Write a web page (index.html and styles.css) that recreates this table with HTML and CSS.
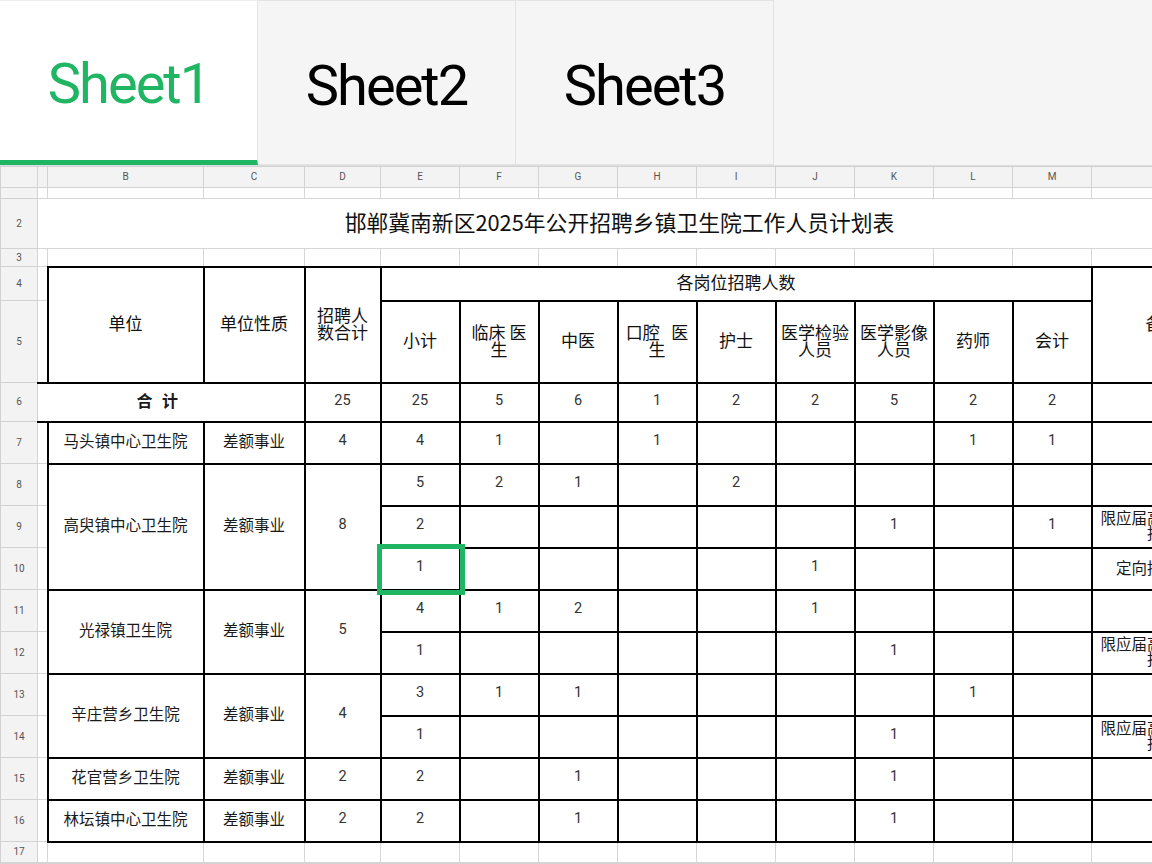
FILE: index.html
```html
<!DOCTYPE html>
<html lang="zh-CN">
<head>
<meta charset="utf-8">
<title>Sheet1</title>
<link rel="stylesheet" href="styles.css">
</head>
<body>
<div class="tabs">
  <div class="tab active">Sheet1</div>
  <div class="tab">Sheet2</div>
  <div class="tab">Sheet3</div>
  <div class="tab-rest"></div>
</div>
<div class="sheet">
<table class="grid">
  <colgroup>
    <col class="w-rh"><col class="w-a"><col class="w-b"><col class="w-c"><col class="w-d">
    <col class="w-x"><col class="w-x"><col class="w-x"><col class="w-x"><col class="w-x">
    <col class="w-x"><col class="w-x"><col class="w-x"><col class="w-x"><col class="w-n">
  </colgroup>
  <tr class="r-hdr">
    <th class="corner"></th><th class="ch"></th><th class="ch">B</th><th class="ch">C</th><th class="ch">D</th>
    <th class="ch">E</th><th class="ch">F</th><th class="ch">G</th><th class="ch">H</th><th class="ch">I</th>
    <th class="ch">J</th><th class="ch">K</th><th class="ch">L</th><th class="ch">M</th><th class="ch"></th>
  </tr>
  <tr class="r1">
    <th class="rh"></th><td></td><td></td><td></td><td></td><td></td><td></td><td></td><td></td><td></td><td></td><td></td><td></td><td></td><td></td>
  </tr>
  <tr class="r2">
    <th class="rh">2</th>
    <td class="title" colspan="14">邯郸冀南新区2025年公开招聘乡镇卫生院工作人员计划表</td>
  </tr>
  <tr class="r3">
    <th class="rh">3</th><td></td><td></td><td></td><td></td><td></td><td></td><td></td><td></td><td></td><td></td><td></td><td></td><td></td><td></td>
  </tr>
  <tr class="r4">
    <th class="rh">4</th><td></td>
    <td class="b hd" rowspan="2">单位</td>
    <td class="b hd" rowspan="2">单位性质</td>
    <td class="b hd" rowspan="2">招聘人<br>数合计</td>
    <td class="b hd" colspan="9">各岗位招聘人数</td>
    <td class="b hd" rowspan="2">备注</td>
  </tr>
  <tr class="r5">
    <th class="rh">5</th><td></td>
    <td class="b hd">小计</td>
    <td class="b hd">临床 医<br>生</td>
    <td class="b hd">中医</td>
    <td class="b hd">口腔&nbsp;&nbsp; 医<br>生</td>
    <td class="b hd">护士</td>
    <td class="b hd">医学检验<br>人员</td>
    <td class="b hd">医学影像<br>人员</td>
    <td class="b hd">药师</td>
    <td class="b hd">会计</td>
  </tr>
  <tr class="r6">
    <th class="rh">6</th>
    <td class="b total" colspan="3">合 计</td>
    <td class="b n">25</td><td class="b n">25</td><td class="b n">5</td><td class="b n">6</td><td class="b n">1</td>
    <td class="b n">2</td><td class="b n">2</td><td class="b n">5</td><td class="b n">2</td><td class="b n">2</td><td class="b"></td>
  </tr>
  <tr class="rd">
    <th class="rh">7</th><td></td>
    <td class="b">马头镇中心卫生院</td><td class="b">差额事业</td><td class="b n">4</td>
    <td class="b n">4</td><td class="b n">1</td><td class="b"></td><td class="b n">1</td><td class="b"></td>
    <td class="b"></td><td class="b"></td><td class="b n">1</td><td class="b n">1</td><td class="b"></td>
  </tr>
  <tr class="rd">
    <th class="rh">8</th><td></td>
    <td class="b" rowspan="3">高臾镇中心卫生院</td><td class="b" rowspan="3">差额事业</td><td class="b n" rowspan="3">8</td>
    <td class="b n">5</td><td class="b n">2</td><td class="b n">1</td><td class="b"></td><td class="b n">2</td>
    <td class="b"></td><td class="b"></td><td class="b"></td><td class="b"></td><td class="b"></td>
  </tr>
  <tr class="rd">
    <th class="rh">9</th><td></td>
    <td class="b n">2</td><td class="b"></td><td class="b"></td><td class="b"></td><td class="b"></td>
    <td class="b"></td><td class="b n">1</td><td class="b"></td><td class="b n">1</td>
    <td class="b note">限应届高校毕业生<br>报考</td>
  </tr>
  <tr class="rd">
    <th class="rh">10</th><td></td>
    <td class="b n sel">1<span class="selbox"></span></td><td class="b"></td><td class="b"></td><td class="b"></td><td class="b"></td>
    <td class="b n">1</td><td class="b"></td><td class="b"></td><td class="b"></td>
    <td class="b note">定向招聘村医</td>
  </tr>
  <tr class="rd">
    <th class="rh">11</th><td></td>
    <td class="b" rowspan="2">光禄镇卫生院</td><td class="b" rowspan="2">差额事业</td><td class="b n" rowspan="2">5</td>
    <td class="b n">4</td><td class="b n">1</td><td class="b n">2</td><td class="b"></td><td class="b"></td>
    <td class="b n">1</td><td class="b"></td><td class="b"></td><td class="b"></td><td class="b"></td>
  </tr>
  <tr class="rd">
    <th class="rh">12</th><td></td>
    <td class="b n">1</td><td class="b"></td><td class="b"></td><td class="b"></td><td class="b"></td>
    <td class="b"></td><td class="b n">1</td><td class="b"></td><td class="b"></td>
    <td class="b note">限应届高校毕业生<br>报考</td>
  </tr>
  <tr class="rd">
    <th class="rh">13</th><td></td>
    <td class="b" rowspan="2">辛庄营乡卫生院</td><td class="b" rowspan="2">差额事业</td><td class="b n" rowspan="2">4</td>
    <td class="b n">3</td><td class="b n">1</td><td class="b n">1</td><td class="b"></td><td class="b"></td>
    <td class="b"></td><td class="b"></td><td class="b n">1</td><td class="b"></td><td class="b"></td>
  </tr>
  <tr class="rd">
    <th class="rh">14</th><td></td>
    <td class="b n">1</td><td class="b"></td><td class="b"></td><td class="b"></td><td class="b"></td>
    <td class="b"></td><td class="b n">1</td><td class="b"></td><td class="b"></td>
    <td class="b note">限应届高校毕业生<br>报考</td>
  </tr>
  <tr class="rd">
    <th class="rh">15</th><td></td>
    <td class="b">花官营乡卫生院</td><td class="b">差额事业</td><td class="b n">2</td>
    <td class="b n">2</td><td class="b"></td><td class="b n">1</td><td class="b"></td><td class="b"></td>
    <td class="b"></td><td class="b n">1</td><td class="b"></td><td class="b"></td><td class="b"></td>
  </tr>
  <tr class="rd">
    <th class="rh">16</th><td></td>
    <td class="b">林坛镇中心卫生院</td><td class="b">差额事业</td><td class="b n">2</td>
    <td class="b n">2</td><td class="b"></td><td class="b n">1</td><td class="b"></td><td class="b"></td>
    <td class="b"></td><td class="b n">1</td><td class="b"></td><td class="b"></td><td class="b"></td>
  </tr>
  <tr class="r17">
    <th class="rh">17</th><td></td><td></td><td></td><td></td><td></td><td></td><td></td><td></td><td></td><td></td><td></td><td></td><td></td><td></td>
  </tr>
</table>
</div>
</body>
</html>
```

FILE: styles.css
```css
html, body {
  margin: 0;
  padding: 0;
}
body {
  width: 1152px;
  height: 864px;
  overflow: hidden;
  background: #ffffff;
  font-family: "Noto Sans CJK SC", sans-serif;
}

/* ---------- sheet tabs ---------- */
.tabs {
  display: flex;
  height: 166px;
  background: #f5f5f5;
  box-sizing: border-box;
  border-bottom: 1px solid #dedede;
}
.tab {
  width: 258px;
  flex: none;
  box-sizing: border-box;
  display: flex;
  align-items: center;
  justify-content: center;
  padding-top: 6px;
  font-family: Roboto, "Noto Sans", sans-serif;
  font-size: 56px;
  letter-spacing: -2px;
  color: #000000;
  background: #f5f5f5;
  border: 1px solid #e3e3e3;
  border-left: none;
}
.tab.active {
  background: #ffffff;
  color: #1fb563;
  border-top: 1px solid #eeeeee;
  border-bottom: 5px solid #1fb563;
}
.tab-rest {
  flex: 1;
  background: #f5f5f5;
}

/* ---------- grid ---------- */
.sheet {
  height: 696px;
  overflow: hidden;
  border-bottom: 2px solid #d4d4d4;
}
.grid {
  border-collapse: collapse;
  table-layout: fixed;
  width: 1233px;
}
.w-rh { width: 37px; }
.w-a { width: 10px; }
.w-b { width: 156px; }
.w-c { width: 101px; }
.w-d { width: 76px; }
.w-x { width: 79px; }
.w-n { width: 142px; }

.grid th,
.grid td {
  border: 1px solid #d6d6d6;
  padding: 0 0 3px 0;
  text-align: center;
  vertical-align: middle;
  font-size: 15.5px;
  font-weight: 400;
  color: #1a1a1a;
  line-height: 1.1;
  overflow: hidden;
  white-space: nowrap;
}
.grid th.corner,
.grid th.ch,
.grid th.rh {
  background: #f3f3f3;
  font-family: Roboto, "Noto Sans", sans-serif;
  font-size: 10px;
  color: #555555;
  border-color: #d2d2d2;
  line-height: 1;
  padding: 0;
}

.r-hdr { height: 21px; }
.r1 { height: 11px; }
.r2 { height: 50px; }
.r3 { height: 18px; }
.r4 { height: 34px; }
.r5 { height: 82px; }
.r6 { height: 39px; }
.rd { height: 42px; }
.r17 { height: 21px; }

.grid td.title {
  font-size: 21.8px;
  color: #111111;
  padding: 0 32px 4px 0;
}

.grid td.b {
  border: 2px solid #000000;
}
.grid td.hd {
  font-size: 17px;
  line-height: 17px;
  color: #111111;
  padding-bottom: 4px;
}
.grid td.total {
  font-weight: 700;
  font-size: 16px;
  word-spacing: 6px;
  padding-right: 27px;
  border-left: 1px solid #d2d2d2;
}
.grid td.n {
  font-family: Roboto, "Noto Sans", sans-serif;
  font-size: 14.5px;
  color: #333333;
}
.grid td.note {
  font-size: 15.5px;
  line-height: 15px;
  color: #1a1a1a;
}

.grid td.sel {
  position: relative;
  overflow: visible;
}
.selbox {
  position: absolute;
  left: -5px;
  top: -5px;
  right: -6px;
  bottom: -6px;
  border: 5px solid #1fb563;
  pointer-events: none;
}
```
